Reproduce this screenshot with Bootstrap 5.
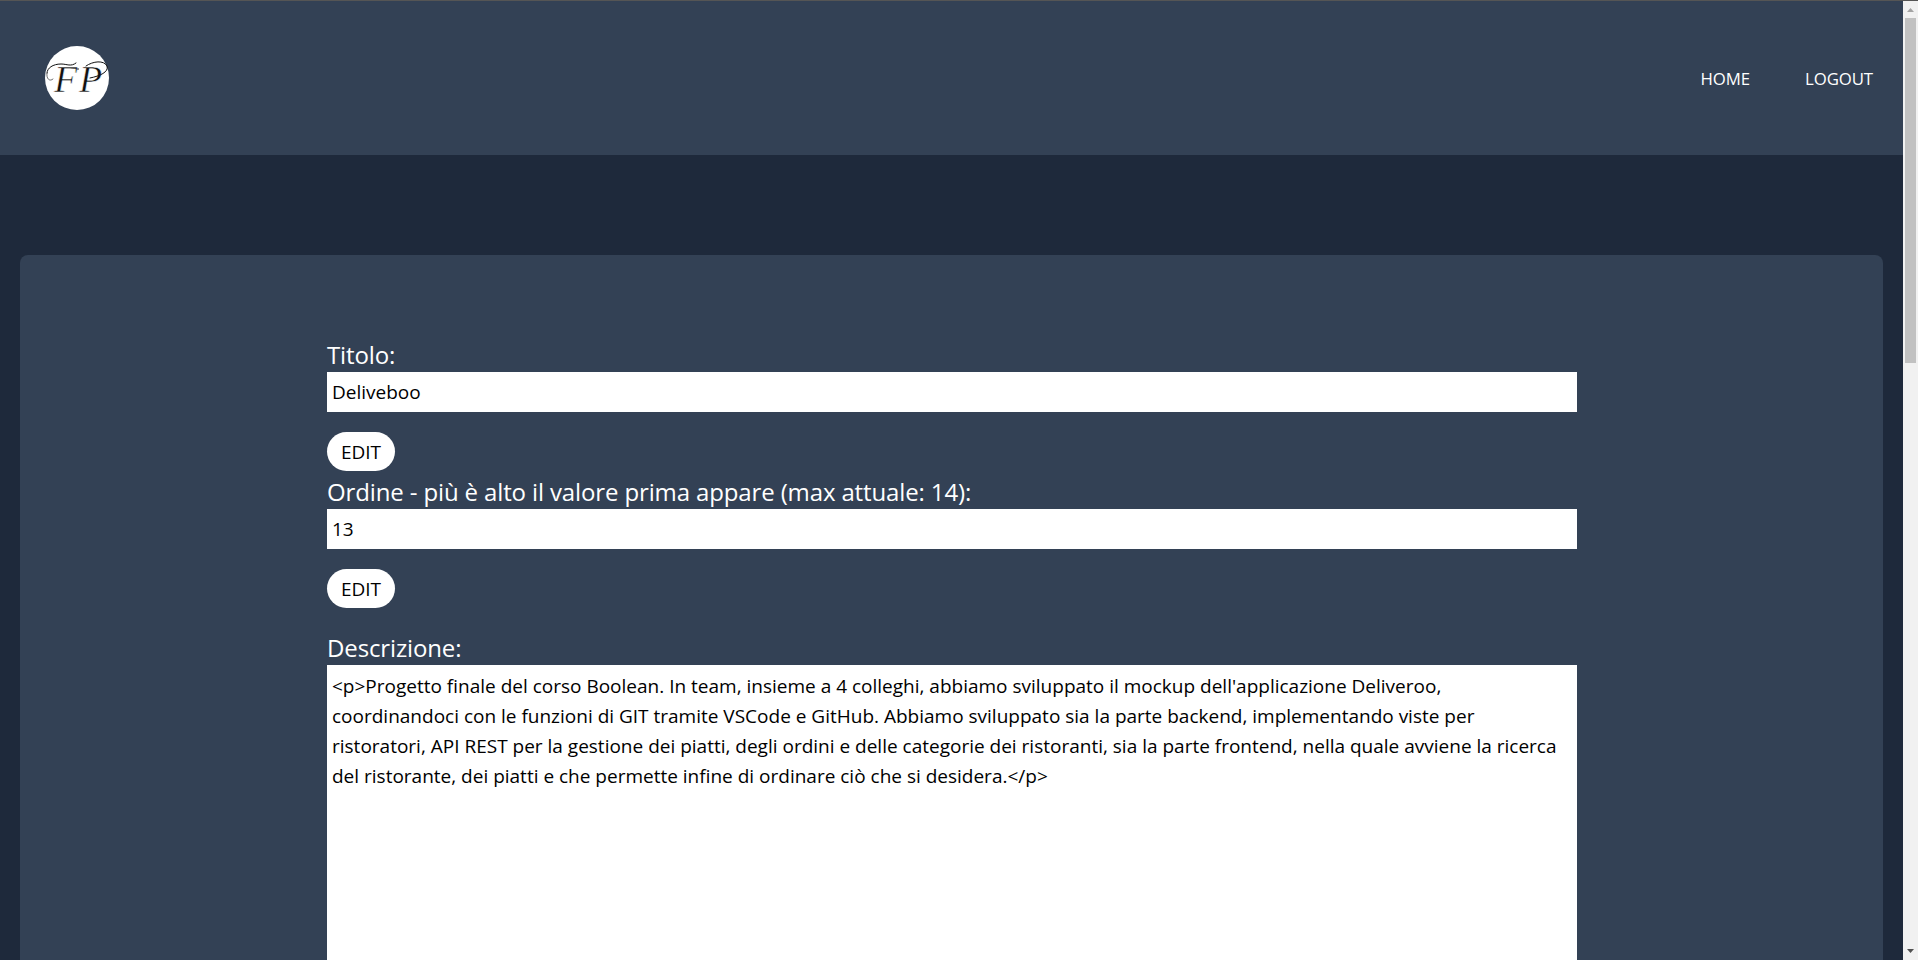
<!doctype html>
<html lang="it">
<head>
<meta charset="utf-8">
<title>Progetto</title>
<link href="https://cdn.jsdelivr.net/npm/bootstrap@5.3.0/dist/css/bootstrap.min.css" rel="stylesheet">
<style>
html, body { height: 960px; overflow: hidden; }
body { background: #1e293b; font-family: "Open Sans", "Noto Sans", sans-serif; border-top: 1px solid #555; }
.view-pane { flex: 1 1 auto; min-width: 0; height: 959px; overflow: hidden; }
.top-head { background: #334155; height: 154px; padding: 0 30px 0 45px; }
.logo-disc { width: 64px; height: 64px; }
.top-link { color: #fff; font-size: 16.8px; letter-spacing: -.1px; text-decoration: none; padding-top: 2px; }
.top-links { gap: 55px; }
.sheet { background: #334155; margin: 100px 20px 0; border-radius: 8px; height: 900px; padding: 85px 306px 0 307px; }
.fld-label { color: #fff; font-size: 24px; letter-spacing: -.13px; line-height: 29px; padding-bottom: 3px; display: block; margin: 0; }
.fld-input { display: block; width: 100%; height: 40px; background: #fff; border: 0; border-radius: 0; padding: 0 5px; font-size: 19px; color: #000; font-family: inherit; outline: 0; }
.fld-area { display: block; width: 100%; height: 500px; background: #fff; border: 0; border-radius: 0; padding: 6px 5px; font-size: 19px; line-height: 30px; color: #000; font-family: inherit; resize: none; outline: 0; overflow: hidden; }
.edit-pill { display: block; width: 68px; height: 39px; margin-top: 20px; background: #fff; color: #000; border: 0; border-radius: 20px; padding: 2px 0 0; font-size: 19px; }
.gap-small { margin-top: 6px; }
.gap-before { margin-top: 25px; }
.fake-bar { width: 15px; height: 959px; background: #f1f1f1; flex: none; }
.bar-btn { height: 17px; }
.bar-thumb { height: 345px; margin: 0 2px; background: #c1c1c1; }
.bar-fill { flex: 1 1 auto; }
</style>
</head>
<body class="d-flex m-0">
<div class="view-pane">
  <header class="top-head d-flex align-items-center justify-content-between">
    <a href="#" class="d-block">
      <svg class="logo-disc d-block" viewBox="0 0 64 64" role="img" aria-label="FP">
        <circle cx="32" cy="32" r="32" fill="#fff"/>
        <g fill="#111" stroke="#fff" stroke-width=".55" font-family="Liberation Serif" font-style="italic" font-size="38">
          <text x="9" y="46">F</text>
          <text x="34" y="46">P</text>
        </g>
        <g fill="none" stroke="#111" stroke-linecap="round">
          <path d="M2 27C2 22 8 18 16 18C22 18 26 21 31 17" stroke-width="1"/>
          <path d="M2 27C1 33 5 36 8 33" stroke-width=".6"/>
          <path d="M41 20C48 15 59 14 62 20C64 26 55 30 45 32" stroke-width="1"/>
        </g>
        <circle cx="33" cy="23" r=".8" fill="#111"/>
      </svg>
    </a>
    <nav class="top-links d-flex">
      <a class="top-link" href="#">HOME</a>
      <a class="top-link" href="#">LOGOUT</a>
    </nav>
  </header>
  <main class="sheet">
    <form>
      <label class="fld-label" for="t1">Titolo:</label>
      <input class="fld-input" id="t1" value="Deliveboo">
      <button type="button" class="edit-pill">EDIT</button>
      <label class="fld-label gap-small" for="t2">Ordine - più è alto il valore prima appare (max attuale: 14):</label>
      <input class="fld-input" id="t2" value="13">
      <button type="button" class="edit-pill">EDIT</button>
      <label class="fld-label gap-before" for="t3">Descrizione:</label>
      <textarea class="fld-area" id="t3" wrap="off">&lt;p&gt;Progetto finale del corso Boolean. In team, insieme a 4 colleghi, abbiamo sviluppato il mockup dell'applicazione Deliveroo,
coordinandoci con le funzioni di GIT tramite VSCode e GitHub. Abbiamo sviluppato sia la parte backend, implementando viste per
ristoratori, API REST per la gestione dei piatti, degli ordini e delle categorie dei ristoranti, sia la parte frontend, nella quale avviene la ricerca
del ristorante, dei piatti e che permette infine di ordinare ciò che si desidera.&lt;/p&gt;</textarea>
    </form>
  </main>
</div>
<aside class="fake-bar d-flex flex-column" aria-hidden="true">
  <div class="bar-btn"><svg class="d-block" width="15" height="17" viewBox="0 0 15 17"><path d="M4 11L7.5 7L11 11Z" fill="#a3a3a3"/></svg></div>
  <div class="bar-thumb"></div>
  <div class="bar-fill"></div>
  <div class="bar-btn"><svg class="d-block" width="15" height="17" viewBox="0 0 15 17"><path d="M4 6L7.5 10L11 6Z" fill="#505050"/></svg></div>
</aside>
<script src="https://cdn.jsdelivr.net/npm/bootstrap@5.3.0/dist/js/bootstrap.bundle.min.js"></script>
</body>
</html>
